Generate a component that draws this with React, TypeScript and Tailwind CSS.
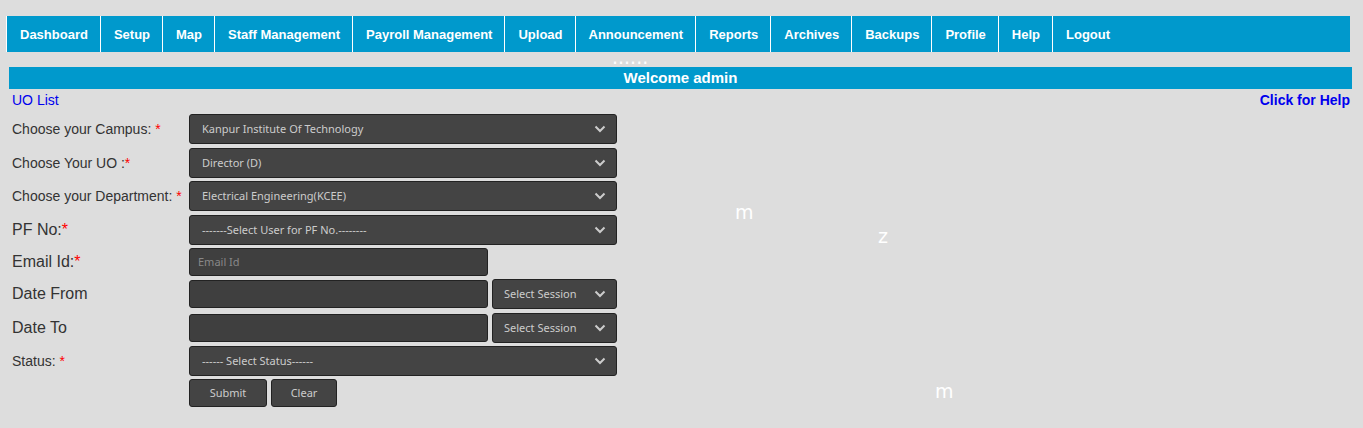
import { useState } from 'react';
import type { ReactNode } from 'react';

const menu = [
  'Dashboard',
  'Setup',
  'Map',
  'Staff Management',
  'Payroll Management',
  'Upload',
  'Announcement',
  'Reports',
  'Archives',
  'Backups',
  'Profile',
  'Help',
  'Logout',
];

const controlStyle =
  'rounded-[3px] border border-[#222] font-["Noto_Sans",sans-serif] text-[11px] text-[#ccc]';

function Select({ id, options, label, className }: { id: string; options: string[]; label?: string; className: string }) {
  return (
    <div className={`relative ${className}`}>
      <select
        id={id}
        aria-label={label}
        className={`block h-[30px] w-full appearance-none bg-[#444] pr-8 ${controlStyle} ${label ? 'pl-[11px]' : 'pl-3'}`}
      >
        {options.map((o) => (
          <option key={o}>{o}</option>
        ))}
      </select>
      <svg
        className="pointer-events-none absolute top-[11px] right-[11px] h-2 w-3"
        viewBox="0 0 12 8"
        fill="none"
        stroke="#ccc"
        strokeWidth="2"
      >
        <path d="M1.5 1.5 6 6l4.5-4.5" />
      </svg>
    </div>
  );
}

function TextBox({ id, placeholder }: { id: string; placeholder?: string }) {
  const [value, setValue] = useState('');
  return (
    <input
      id={id}
      type="text"
      value={value}
      placeholder={placeholder}
      onChange={(e) => setValue(e.target.value)}
      className={`mt-px block h-7 w-[299px] bg-[#3f3f3f] px-2 pb-0.5 placeholder:text-[#888] ${controlStyle}`}
    />
  );
}

function Row({
  id,
  label,
  required,
  large,
  height,
  children,
}: {
  id: string;
  label: string;
  required?: boolean;
  large?: boolean;
  height: string;
  children: ReactNode;
}) {
  return (
    <div className={`flex items-start ${height}`}>
      <label
        htmlFor={id}
        className={`w-[177px] shrink-0 whitespace-pre text-[#333] ${large ? 'text-base leading-[30px]' : 'text-sm leading-[30px]'}`}
      >
        {label}
        {required && <span className="text-[#f00]">*</span>}
      </label>
      <div className="flex gap-1">{children}</div>
    </div>
  );
}

export default function App() {
  return (
    <div className='relative min-h-screen bg-[#ddd] pt-4 font-["Liberation_Sans",Arial,sans-serif]'>
      <nav className="mr-[13px] ml-1.5 flex h-9 bg-[#09c]">
        {menu.map((item) => (
          <a
            key={item}
            href="#"
            className="border-l border-white pr-3 pl-[13px] text-[13px] leading-[38px] font-bold whitespace-nowrap text-white"
          >
            {item}
          </a>
        ))}
      </nav>

      <main className="mt-[15px] mr-[11px] ml-[9px]">
        <h1 className="h-[22px] bg-[#09c] text-center text-[15px] leading-[22px] font-bold text-white">Welcome admin</h1>
        <div className="flex justify-between pr-0.5 pl-[3px] text-sm leading-[22px] text-[#00e]">
          <a href="#">UO List</a>
          <a href="#" className="font-bold">
            Click for Help
          </a>
        </div>

        <form className="mt-[3px] pl-[3px]" onSubmit={(e) => e.preventDefault()}>
          <Row id="campus" label="Choose your Campus: " required height="h-[34px]">
            <Select id="campus" options={['Kanpur Institute Of Technology']} className="w-[428px]" />
          </Row>
          <Row id="uo" label="Choose Your UO :" required height="h-[33px]">
            <Select id="uo" options={['Director (D)']} className="w-[428px]" />
          </Row>
          <Row id="department" label="Choose your Department: " required height="h-[34px]">
            <Select id="department" options={['Electrical Engineering(KCEE)']} className="w-[428px]" />
          </Row>
          <Row id="pf" label="PF No:" required large height="h-8">
            <Select id="pf" options={['-------Select User for PF No.--------']} className="w-[428px]" />
          </Row>
          <Row id="email" label="Email Id:" required large height="h-8">
            <TextBox id="email" placeholder="Email Id" />
          </Row>
          <Row id="from" label="Date From" large height="h-[34px]">
            <TextBox id="from" />
            <Select id="from-session" label="Session from" options={['Select Session']} className="w-[125px]" />
          </Row>
          <Row id="to" label="Date To" large height="h-[33px]">
            <TextBox id="to" />
            <Select id="to-session" label="Session to" options={['Select Session']} className="w-[125px]" />
          </Row>
          <Row id="status" label="Status: " required height="h-[33px]">
            <Select id="status" options={['------ Select Status------']} className="w-[428px]" />
          </Row>
          <div className="flex gap-1 pl-[177px]">
            <button type="submit" className={`h-7 w-[78px] bg-[#444] ${controlStyle}`}>
              Submit
            </button>
            <button type="reset" className={`h-7 w-[66px] bg-[#444] ${controlStyle}`}>
              Clear
            </button>
          </div>
        </form>
      </main>

      <div className='pointer-events-none font-["DejaVu_Sans",sans-serif] text-[19px] leading-6 text-white'>
        <span className="absolute top-[45px] left-[612px]">......</span>
        <span className="absolute top-[200px] left-[735px]">m</span>
        <span className="absolute top-[224px] left-[878px]">z</span>
        <span className="absolute top-[379px] left-[935px]">m</span>
      </div>
    </div>
  );
}
